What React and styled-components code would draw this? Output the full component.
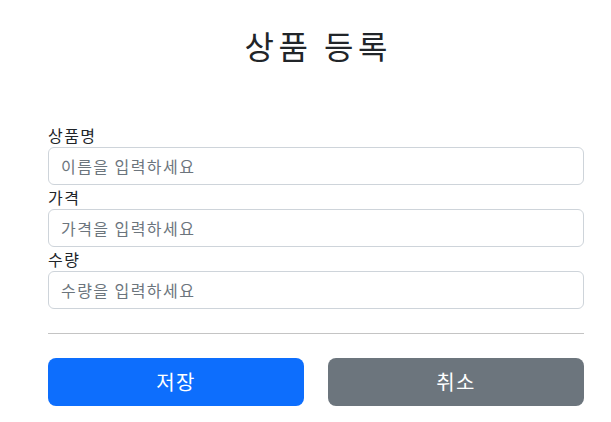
import styled, { createGlobalStyle } from "styled-components";

const GlobalStyle = createGlobalStyle`
  body {
    margin: 0;
    background: #fff;
    color: #212529;
    font-family: "Noto Sans CJK KR", "Noto Sans", sans-serif;
    font-size: 16px;
    line-height: 1.5;
  }
  * { box-sizing: border-box; }
`;

const fields = [
  { label: "상품명", placeholder: "이름을 입력하세요" },
  { label: "가격", placeholder: "가격을 입력하세요" },
  { label: "수량", placeholder: "수량을 입력하세요" },
];

export default function App() {
  return (
    <Page>
      <GlobalStyle />
      <Header>
        <Title>상품 등록</Title>
      </Header>

      <Form>
        {fields.map((f) => (
          <Field key={f.label}>
            <Label>{f.label}</Label>
            <Input placeholder={f.placeholder} />
          </Field>
        ))}

        <Divider />

        <ButtonRow>
          <Button type="button" $bg="#0d6efd">저장</Button>
          <Button type="button" $bg="#6c757d">취소</Button>
        </ButtonRow>
      </Form>
    </Page>
  );
}

const Page = styled.div`
  width: 536px;
  margin-left: 48px;
  letter-spacing: 0.09em;
`;

const Header = styled.div`
  padding: 26px 0 59px;
  text-align: center;
`;

const Title = styled.h2`
  margin: 0;
  font-size: 32px;
  font-weight: 400;
  line-height: 1.2;
  letter-spacing: 0.14em;
  text-indent: 0.14em;
  color: #212529;
`;

const Form = styled.form`
  display: flex;
  flex-direction: column;
`;

const Field = styled.div`
  display: flex;
  flex-direction: column;
`;

const Label = styled.label`
  font-size: 16px;
  line-height: 24px;
  color: #212529;
`;

const Input = styled.input`
  height: 38px;
  padding: 6px 12px;
  font-family: inherit;
  font-size: 16px;
  line-height: 24px;
  letter-spacing: inherit;
  color: #212529;
  border: 1px solid #ced4da;
  border-radius: 6px;
  outline: none;

  &::placeholder {
    color: #6c757d;
  }
`;

const Divider = styled.hr`
  margin: 24px 0;
  border: 0;
  border-top: 1px solid #c4c4c4;
`;

const ButtonRow = styled.div`
  display: grid;
  grid-template-columns: 1fr 1fr;
  gap: 24px;
`;

const Button = styled.button`
  height: 48px;
  border: 0;
  border-radius: 8px;
  background: ${(p) => p.$bg};
  color: #fff;
  font-family: inherit;
  font-size: 20px;
  line-height: 30px;
  letter-spacing: inherit;
`;
